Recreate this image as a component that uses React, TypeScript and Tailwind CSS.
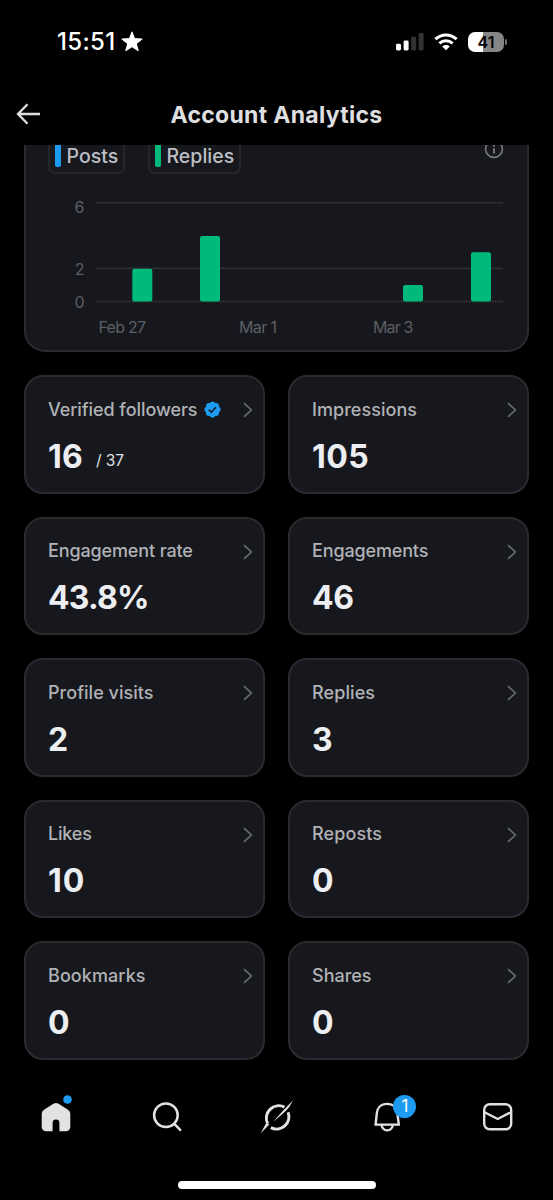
import React from "react";

type Metric = {
  label: string;
  value: string;
  suffix?: string;
  verified?: boolean;
  labelClass: string;
  valueClass: string;
};

const metrics: Metric[] = [
  { label: "Verified followers", value: "16", suffix: "/ 37", verified: true, labelClass: "tracking-[-0.07px]", valueClass: "tracking-[0.2px]" },
  { label: "Impressions", value: "105", labelClass: "tracking-[0.05px]", valueClass: "tracking-[0.4px]" },
  { label: "Engagement rate", value: "43.8%", labelClass: "tracking-[-0.13px]", valueClass: "tracking-[-0.8px]" },
  { label: "Engagements", value: "46", labelClass: "tracking-[-0.15px]", valueClass: "tracking-[-0.5px]" },
  { label: "Profile visits", value: "2", labelClass: "tracking-[0.03px]", valueClass: "tracking-[0px]" },
  { label: "Replies", value: "3", labelClass: "tracking-[0.1px]", valueClass: "tracking-[0px]" },
  { label: "Likes", value: "10", labelClass: "tracking-[-0.2px]", valueClass: "tracking-[1px]" },
  { label: "Reposts", value: "0", labelClass: "tracking-[0.1px]", valueClass: "tracking-[0px]" },
  { label: "Bookmarks", value: "0", labelClass: "tracking-[0.08px]", valueClass: "tracking-[0px]" },
  { label: "Shares", value: "0", labelClass: "tracking-[0px]", valueClass: "tracking-[0px]" },
];

function StatusBar() {
  return (
    <div className="flex h-[83px] shrink-0 items-center justify-between pr-[46px] pl-[57px] text-white">
      <div className="flex items-center gap-[5px]">
        <span className="text-[24px] leading-none font-medium tracking-[0.35px]">15:51</span>
        <svg width="22" height="21" viewBox="0 0 22 21" fill="currentColor" stroke="currentColor" strokeWidth="1.2" strokeLinejoin="round">
          <path d="M11 1.1l2.5 6.6 7.4.3-5.8 4.5 2 7.1L11 15.5l-6.1 4.1 2-7.1L1.1 8l7.4-.3z" />
        </svg>
      </div>
      <div className="flex items-center">
        <svg width="28" height="18" viewBox="0 0 28 18">
          <rect x="0" y="10.8" width="5" height="6.7" rx="1.4" fill="#fff" />
          <rect x="7.6" y="7.5" width="5" height="10" rx="1.4" fill="#fff" />
          <rect x="15.2" y="3.7" width="5" height="13.8" rx="1.4" fill="#333" />
          <rect x="22.6" y="0" width="5" height="17.5" rx="1.4" fill="#333" />
        </svg>
        <svg className="ml-[10px]" width="24" height="18" viewBox="0 0 24 18" fill="none" stroke="#fff" strokeWidth="3">
          <path d="M1.4 6.2a15.2 15.2 0 0 1 21.2 0" />
          <path d="M5.4 10.3a9.6 9.6 0 0 1 13.2 0" />
          <path d="M8.2 13.5a5.6 5.6 0 0 1 7.6 0L12 17.3z" fill="#fff" stroke="none" />
        </svg>
        <div className="ml-[10px] flex h-[20px] w-[36px] items-center justify-center rounded-[7px] bg-[linear-gradient(90deg,#fff_42%,#868686_42%)] text-[16px] leading-none font-semibold text-black">
          41
        </div>
        <div className="ml-[1px] h-[6px] w-[2px] rounded-r-full bg-[#777]" />
      </div>
    </div>
  );
}

function Header() {
  return (
    <header className="grid h-[62px] shrink-0 grid-cols-[60px_1fr_60px] items-center">
      <svg className="ml-[16px]" width="25" height="22" viewBox="0 0 25 22" fill="none" stroke="#dedede" strokeWidth="2.3">
        <path d="M24 11H2.5M11.5 1.3L2 11l9.5 9.7" />
      </svg>
      <h1 className="pt-[2px] text-center text-[23px] leading-none font-bold tracking-[0.3px] whitespace-nowrap text-[#dedfe0]">
        Account Analytics
      </h1>
    </header>
  );
}

const bars = [
  { x: 132.3, value: 2 },
  { x: 200, value: 4 },
  { x: 403, value: 1 },
  { x: 471, value: 3 },
];

function Chart() {
  return (
    <svg className="block" width="501" height="176" viewBox="26 174 501 176">
      <g stroke="#2b2d31" strokeWidth="1.6">
        <path d="M96 202.800H503M96 268.400H503M96 301.500H503" />
      </g>
      {bars.map((b) => (
        <rect key={b.x} x={b.x} y={301.5 - b.value * 16.4} width="20" height={b.value * 16.4} rx="2" fill="#00ba7c" />
      ))}
      <g fill="#5c5f64" fontSize="16">
        <text x="84.5" y="213" textAnchor="end">6</text>
        <text x="84.5" y="274.5" textAnchor="end">2</text>
        <text x="84.5" y="307.5" textAnchor="end">0</text>
        <text x="98.5" y="333" textLength="47.5">Feb 27</text>
        <text x="239" y="333" textLength="38">Mar 1</text>
        <text x="373" y="333" textLength="40.5">Mar 3</text>
      </g>
    </svg>
  );
}

function ChartCard() {
  return (
    <section className="h-[207px] shrink-0 overflow-hidden px-[24px]">
      <div className="-mt-[21px] rounded-[21px] border-2 border-[#292b2f] bg-[#17181d]">
        <div className="flex h-[48px] items-start pl-[22px] text-[19.5px] font-medium text-[#bcbfc4]">
          <div className="flex h-[48px] w-[77px] items-end rounded-[7px] border-2 border-[#25262b] pb-[5px] pl-[5px]">
            <i className="mr-[6px] h-[26px] w-[5.5px] shrink-0 rounded-[2px] bg-[#1d9bf0]" />
            <span className="leading-[22px] tracking-[0px]">Posts</span>
          </div>
          <div className="ml-[23px] flex h-[48px] w-[93px] items-end rounded-[7px] border-2 border-[#25262b] pb-[5px] pl-[5px]">
            <i className="mr-[6px] h-[26px] w-[5.5px] shrink-0 rounded-[2px] bg-[#00ba7c]" />
            <span className="leading-[22px] tracking-[0px]">Replies</span>
          </div>
          <svg className="mt-[13px] mr-[23px] ml-auto" width="20" height="20" viewBox="0 0 20 20" fill="none" stroke="#777a7f" strokeWidth="1.6">
            <circle cx="10" cy="10" r="8.400" />
            <path d="M10 9.200v5.200M10 5.700v2" strokeWidth="1.900" />
          </svg>
        </div>
        <Chart />
      </div>
    </section>
  );
}

function VerifiedBadge() {
  return (
    <svg className="ml-[6px]" width="19" height="19" viewBox="0 0 24 24">
      <path
        fill="#1d9bf0"
        d="M22.25 12c0-1.43-.88-2.67-2.19-3.34.46-1.39.2-2.9-.81-3.91s-2.52-1.27-3.91-.81c-.66-1.31-1.91-2.19-3.34-2.19s-2.67.88-3.33 2.19c-1.4-.46-2.91-.2-3.92.81s-1.26 2.52-.8 3.91c-1.31.67-2.2 1.91-2.2 3.34s.89 2.67 2.2 3.34c-.46 1.39-.21 2.9.8 3.91s2.52 1.26 3.91.81c.67 1.31 1.91 2.19 3.34 2.19s2.68-.88 3.34-2.19c1.39.45 2.9.2 3.91-.81s1.27-2.52.81-3.91c1.31-.67 2.19-1.91 2.19-3.34z"
      />
      <path d="M7.3 12.3l3.3 3.1 5.6-6.2" fill="none" stroke="#17181d" strokeWidth="2" />
    </svg>
  );
}

function MetricCard({ label, value, suffix, verified, labelClass, valueClass }: Metric) {
  return (
    <article className="h-[118.5px] rounded-[19px] border-2 border-[#292b2f] bg-[#17181d] pt-[20.5px] pr-[10px] pl-[22px]">
      <div className="flex h-[24px] items-center whitespace-nowrap">
        <span className={`text-[18px] leading-[24px] font-medium text-[#b0b2b6] ${labelClass}`}>{label}</span>
        {verified && <VerifiedBadge />}
        <svg className="mt-[1px] ml-auto" width="10" height="16" viewBox="0 0 10 16" fill="none" stroke="#66696e" strokeWidth="1.7">
          <path d="M1 1.200L8.300 8 1 14.800" />
        </svg>
      </div>
      <div className="mt-[15px] flex items-baseline">
        <span className={`text-[32px] leading-[40px] font-bold text-[#eceef1] ${valueClass}`}>{value}</span>
        {suffix && <span className="relative -top-[2px] ml-[13px] text-[15.5px] leading-none tracking-[-0.1px] text-[#dfe1e4]">{suffix}</span>}
      </div>
    </article>
  );
}

function BottomNav() {
  return (
    <nav className="mt-[28.5px] grid h-[58px] shrink-0 grid-cols-5 items-center justify-items-center pl-[1px] text-[#e2e2e2]">
      <div className="relative">
        <svg width="30" height="30" viewBox="0 0 30 30" fill="currentColor">
          <path d="M12.8 1.6a4 4 0 0 1 4.4 0l9.8 6.2a5 5 0 0 1 2.3 4.2v13a4.2 4.2 0 0 1-4.2 4.2h-6.7V21a3.4 3.4 0 0 0-6.8 0v8.2H4.9A4.2 4.2 0 0 1 .7 25V12A5 5 0 0 1 3 7.800z" />
        </svg>
        <svg className="absolute -top-[7px] -right-[1px]" width="9" height="9" viewBox="0 0 9 9">
          <circle cx="4.5" cy="4.5" r="4.3" fill="#1d9bf0" />
        </svg>
      </div>
      <svg width="30" height="30" viewBox="0 0 30 30" fill="none" stroke="currentColor" strokeWidth="2.500" strokeLinecap="round">
        <circle cx="13.900" cy="13.300" r="11.800" />
        <path d="M22.300 21.900L28.200 27.900" />
      </svg>
      <svg width="36" height="36" viewBox="0 0 36 36">
        <path
          d="M25.500 8.200A12.400 12.400 0 0 0 8.700 24.800M29.100 13.200A12.400 12.400 0 0 1 11.800 28.600"
          fill="none"
          stroke="currentColor"
          strokeWidth="3"
        />
        <path d="M34 1.500Q30.800 8.200 26.500 12.200L14.500 22.700Q22.500 12.700 34 1.500zM1.500 34.500L7.400 23.700 10.300 25.600z" fill="currentColor" />
      </svg>
      <div className="relative">
        <svg width="30" height="30" viewBox="0 0 30 30" fill="none" stroke="currentColor" strokeWidth="2.400">
          <path d="M15 1.900c-6 0-9.800 4-10.200 9.500L3.600 22.600h23.200l-1.400-11.200C24.900 5.900 21 1.900 15 1.900z" />
          <path d="M9.600 22.800a5.600 5.600 0 0 0 11.200 0" />
        </svg>
        <span className="absolute -top-[7px] left-[21px] flex size-[23px] items-center justify-center rounded-full bg-[#1d9bf0] text-[17px] leading-none text-white">
          1
        </span>
      </div>
      <svg width="31" height="30" viewBox="0 0 31 30" fill="none" stroke="currentColor" strokeWidth="2.400">
        <rect x="2.200" y="2.300" width="27" height="25" rx="5.500" />
        <path d="M2.500 10.200L15.700 17 29 10.200" />
      </svg>
    </nav>
  );
}

export default function App() {
  return (
    <main className="flex h-[1200px] w-[553px] flex-col overflow-hidden bg-black font-['Inter','Liberation_Sans',sans-serif]">
      <StatusBar />
      <Header />
      <ChartCard />
      <div className="mt-[23px] grid shrink-0 grid-cols-2 gap-x-[23px] gap-y-[23px] px-[24px]">
        {metrics.map((m) => (
          <MetricCard key={m.label} {...m} />
        ))}
      </div>
      <BottomNav />
      <div className="mx-auto mt-[35px] h-[7.5px] w-[198px] shrink-0 rounded-full bg-white" />
    </main>
  );
}
